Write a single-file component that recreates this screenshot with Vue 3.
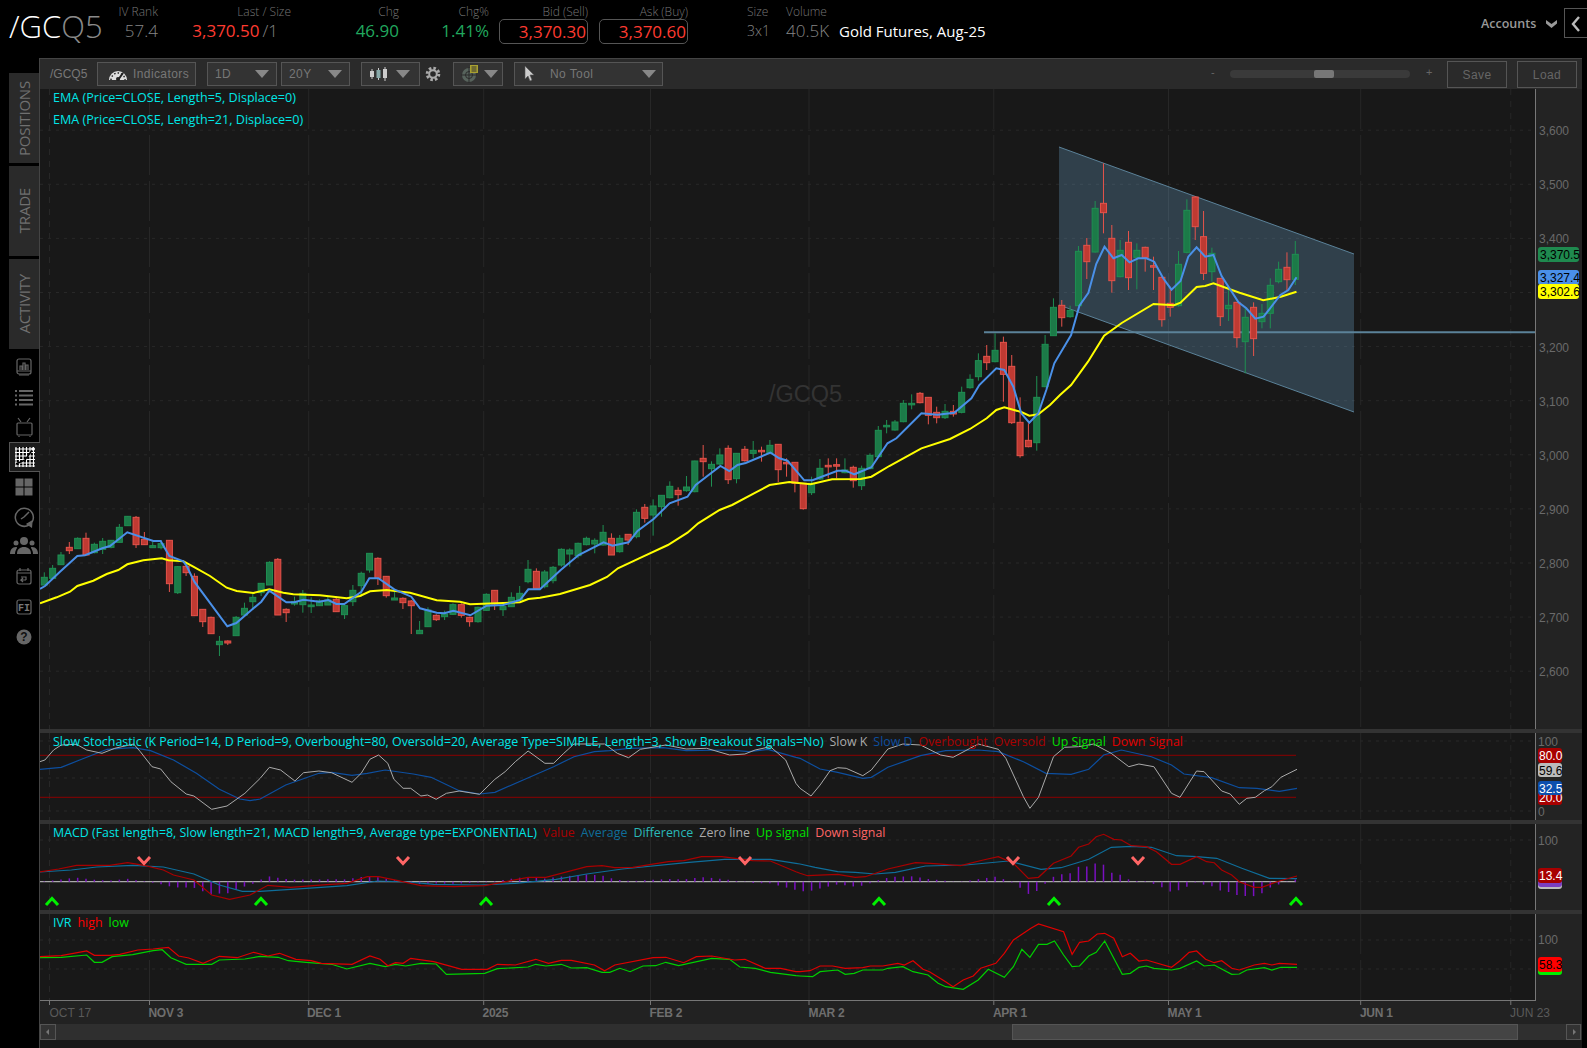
<script setup>
// measured from the chart: each block keeps its own x/y origin and x scale
const barX = (i) => 44.3 + 8.34 * i

function rows(start, yBase, list) {
  return list.map((r, n) => ({
    x: barX(start + n),
    up: r[0] === 'g',
    hi: yBase + r[1] / 3,
    top: yBase + r[2] / 3,
    bot: yBase + r[3] / 3,
    lo: yBase + r[4] / 3
  }))
}

const candles = [
  ...rows(0, 490, [
    ['g',247,262,285,285],['g',225,235,265,265],['g',186,195,224,224],['r',156,172,182,192],['g',142,145,176,177],
    ['r',128,145,195,195],['g',158,163,188,190],['g',144,154,178,192],['g',150,151,172,175],['g',102,112,157,158],
    ['g',78,79,107,108],['r',78,82,164,174],['r',126,148,164,165],['g',155,167,173,173],['g',150,161,173,178],
    ['r',150,151,281,306],['g',228,230,308,312],['r',228,229,248,258],['r',250,259,377,378],['r',358,358,395,411],
    ['r',380,382,431,431],['g',438,454,464,498],['r',451,453,459,465],['g',378,382,437,437],['g',338,355,375,375],
    ['g',310,322,335,360],['g',280,280,308,318],['g',214,217,285,285],['r',204,208,375,375],['r',355,358,368,396],
    ['g',320,335,342,347],['g',300,310,344,368],['g',322,345,350,369],['g',328,333,347,348],['g',320,330,345,345],
    ['r',320,328,365,365],['g',340,347,374,387],['g',285,301,335,348],['g',245,250,287,320],['g',190,190,240,248],
    ['r',202,205,265,285],['r',258,259,317,323],['g',305,324,330,330],['r',322,325,338,357],['r',330,333,347,432],
    ['g',393,421,431,431],['g',352,360,410,411],['r',373,376,389,393],['g',362,372,380,390],['g',340,344,373,375],
    ['r',340,344,376,383],['r',380,382,395,410],['g',350,352,395,398],['g',310,313,361,362],['r',300,301,342,360],
    ['g',340,350,359,378],['g',307,322,350,350],['g',288,310,330,335],['g',210,238,275,280],['r',235,244,295,295]
  ]),
  ...rows(60, 370, [
    ['g',600,606,650,655],['g',588,592,632,640],['g',535,538,585,590],['g',535,540,552,590],['g',518,520,557,565],
    ['g',500,505,524,526],['g',505,511,522,550],['g',465,487,525,527],['r',490,505,555,555],['g',495,505,545,548],
    ['r',493,493,510,525],['g',418,427,500,505],['r',402,412,445,458],['g',388,408,435,497],['g',376,376,410,440],
    ['g',334,349,383,385],['r',352,361,374,407],['g',318,351,362,365],['g',272,273,365,367],['r',225,265,275,320],
    ['g',274,283,296,350],['g',235,255,282,285],['r',226,235,329,342],['g',250,250,326,340],['r',228,238,272,275],
    ['g',213,241,250,265],['r',230,241,245,275],['g',210,226,250,252],['r',222,223,299,336],['r',265,277,281,320],
    ['r',277,277,340,367],['r',340,340,416,419],['g',320,340,368,375],['g',267,295,327,330],['r',265,286,288,325],
    ['r',265,284,287,325],['g',265,300,308,310],['r',287,292,332,353],['g',287,295,347,360],['g',250,256,296,298],
    ['g',168,181,260,262],['g',150,166,170,190],['g',150,156,180,182],['g',90,100,155,157],['g',73,100,104,118],
    ['r',66,70,98,100],['r',82,82,136,163],['r',110,127,143,160],['g',102,124,143,147],['r',105,124,132,140]
  ]),
  ...rows(110, 330, [
    ['g',170,187,247,250],['g',133,148,173,176],['g',70,92,140,152],['r',45,79,98,120],['g',10,61,95,97],
    ['r',20,37,133,215],['r',75,109,278,282],['r',202,277,377,383],['r',280,331,350,352],['g',138,202,338,362],
    ['g',15,43,170,172]
  ]),
  ...rows(121, 140, [
    ['g',475,502,587,587],['r',480,496,533,560],['g',497,511,530,533],['g',318,334,497,497],['r',294,316,365,417],
    ['g',183,205,336,338],['r',70,190,218,280],['r',255,295,422,458],['g',300,331,410,412],['r',273,307,413,450],
    ['g',310,331,352,448],['r',320,322,352,395],['r',350,377,380,450],['r',412,412,539,560],['r',440,490,502,530],
    ['g',333,373,497,500],['g',178,211,337,340],['r',168,171,260,300],['r',213,290,400,420],['g',323,340,395,425],
    ['r',415,415,530,558],['g',450,496,506,543],['r',487,487,593,623],['g',500,532,605,700],['r',487,502,596,648],
    ['g',492,520,545,565],['g',415,436,520,565],['g',365,388,425,430],['r',337,382,419,450],['g',303,343,418,435]
  ])
]

function seg(xBase, xScale, yBase, flat) {
  const out = []
  for (let i = 0; i < flat.length; i += 2) out.push([xBase + flat[i] / xScale, yBase + flat[i + 1] / 3])
  return out
}
const join = (pts) => pts.map((p) => p[0].toFixed(1) + ',' + p[1].toFixed(1)).join(' ')

const yellow = join([
  ...seg(40, 3, 490, [0,340,50,322,90,305,112,288,160,272,200,252,235,240,262,223,310,211,365,205,385,211,430,214,460,230,510,258,560,293,590,303,640,309,688,298,730,308,760,313,840,316,920,325,960,318,990,304,1040,300,1110,308,1190,331,1260,335,1290,343,1440,337,1465,327,1500,323]),
  [560, 594], [590, 585], [607, 577],
  ...seg(500, 2.8, 370, [330,595,400,560,470,525,525,488,555,460,615,420,650,405,715,368,755,345,810,336,870,343,930,328,1010,327,1040,320,1090,288,1180,235]),
  ...seg(950, 3, 330, [0,327,60,297,110,265,139,240,163,232,214,246,238,257,265,253,300,225,330,195]),
  ...seg(1000, 2.671, 140, [190,735,235,665,278,587,325,549,410,492,465,496,482,488,525,441,548,438,570,430,640,458,703,481,750,470,792,455])
])

const blue = join([
  ...seg(40, 3, 490, [0,297,15,288,60,245,112,198,135,196,187,175,210,168,262,127,340,153,362,153,388,198,430,214,440,228,463,275,562,409,589,399,637,358,664,335,688,302,739,337,763,337,790,329,838,335,865,330,889,342,913,342,964,305,988,265,1015,265,1063,298,1114,320,1140,355,1190,368,1213,370,1240,362,1291,376,1340,347,1390,345,1440,330,1465,298,1500,298]),
  ...seg(500, 2.8, 370, [170,600,220,555,290,517,315,527,360,517,385,483,430,447,475,400,525,380,548,345,617,288,642,303,665,285,688,279,757,248,782,265,805,272,852,331,875,331,945,302,968,302,992,313,1040,292,1085,220,1110,205,1180,130,1225,134,1272,128,1320,85]),
  ...seg(950, 3, 330, [88,165,139,115,163,120,190,170,214,250,238,278,265,250,289,180,313,100]),
  ...seg(1000, 2.671, 140, [190,585,212,497,236,458,257,372,279,320,303,355,325,345,346,367,369,355,391,355,412,365,436,415,458,449,482,423,503,350,525,322,548,350,570,345,592,408,637,487,658,505,682,536,704,530,749,465,770,450,792,412])
])

const both = (a, b) => [...seg(0, 1.96, 720, a), ...seg(800, 1.992, 720, b)]

const slowK = join(both(
  [78,125,88,120,105,90,120,75,150,73,170,90,200,100,225,85,262,72,275,95,298,140,315,147,335,185,365,222,380,228,415,268,445,258,480,220,510,175,528,142,550,150,578,183,595,158,625,153,650,158,690,187,708,160,725,118,742,105,760,130,772,178,790,205,805,205,825,228,838,225,855,238,875,220,900,213,940,223,970,178,990,155,1010,125,1035,93,1068,130,1085,130,1105,100,1125,72,1185,72,1210,100,1232,113,1255,88,1305,75,1345,87,1385,85,1430,105,1460,102,1480,90,1510,80,1540,120,1560,190],
  [0,205,22,228,40,195,60,152,75,143,92,145,125,167,142,150,175,87,205,72,240,75,280,105,305,112,355,72,395,88,410,115,445,230,458,265,475,232,505,110,527,82,555,80,585,72,620,100,655,140,675,132,705,140,740,220,757,232,790,153,805,155,840,213,857,222,875,253,890,235,907,232,925,212,940,200,958,172,990,148]
))
const slowD = join(both(
  [78,148,120,142,160,118,210,88,260,83,295,92,340,120,385,160,430,208,470,237,490,242,510,237,560,195,625,160,650,157,690,166,720,160,755,150,810,162,845,172,900,212,940,222,970,217,1040,170,1085,140,1125,110,1165,95,1195,92,1232,85,1300,83,1345,92,1430,90,1468,95,1505,88,1560,112],
  [0,115,40,147,75,157,125,175,142,172,175,142,240,107,290,92,355,90,395,95,445,125,490,160,540,163,575,148,605,105,640,90,700,110,740,135,765,162,820,173,875,203,910,205,955,214,990,205]
))

const macdValue = both(
  [78,456,115,447,150,436,215,436,250,428,285,437,320,450,340,465,380,480,415,525,450,538,490,525,525,496,570,502,640,494,680,490,720,470,742,470,780,482,825,497,890,500,950,497,1035,472,1070,472,1150,440,1180,437,1205,443,1240,442,1310,425,1340,422,1375,410,1415,410,1475,422,1510,423,1560,455],
  [0,460,15,467,75,463,110,472,130,470,175,447,230,428,260,430,320,437,365,420,395,410,425,430,455,475,475,472,505,430,540,408,555,382,575,372,590,350,605,343,625,358,640,360,660,377,690,380,710,395,740,433,757,433,790,410,810,425,825,428,840,450,860,465,875,485,905,502,920,502,950,485,990,468]
)
const macdAvg = both(
  [78,456,140,450,190,441,260,436,320,441,380,462,430,495,475,514,510,514,600,505,680,497,740,483,800,486,850,493,940,495,1010,490,1090,478,1150,462,1220,447,1345,428,1420,418,1510,418,1560,430],
  [0,432,30,442,75,455,110,457,150,462,190,457,250,438,330,435,415,423,480,448,520,443,575,418,620,382,660,379,700,382,750,407,790,410,830,415,880,445,935,475,990,476]
)
const macdValueLine = join(macdValue)
const macdAvgLine = join(macdAvg)

const ivrHigh = join(both(
  [78,710,120,707,170,693,185,706,215,706,235,703,270,690,300,687,330,682,350,708,370,714,398,730,430,709,465,713,497,697,525,708,548,700,580,718,610,722,630,730,690,733,725,708,745,718,760,737,775,728,790,730,805,715,850,725,905,748,955,748,975,733,1010,735,1050,718,1075,730,1100,721,1120,721,1165,735,1185,752,1205,735,1280,713,1305,712,1340,728,1365,710,1395,708,1440,720,1460,718,1500,745,1530,745,1560,755],
  [0,755,20,752,40,738,65,738,90,745,125,743,140,738,165,738,195,730,208,735,225,722,245,748,258,755,290,785,305,800,325,780,345,768,360,745,390,730,407,700,425,660,460,625,475,612,525,635,542,703,557,667,575,663,592,642,607,640,625,655,642,710,658,700,675,723,690,720,740,742,757,722,775,697,790,693,808,718,825,728,840,722,860,745,875,750,905,735,925,730,940,735,955,730,990,733]
))
const ivrLow = join(both(
  [78,713,120,712,170,705,185,727,200,727,220,710,260,704,300,692,318,689,335,713,365,733,415,733,430,720,480,717,510,709,545,712,565,722,600,727,650,733,680,747,725,730,755,740,775,733,795,738,825,730,855,732,875,763,950,760,975,746,1035,741,1050,733,1070,738,1100,733,1120,744,1150,743,1180,757,1195,757,1215,745,1235,755,1260,738,1285,737,1305,727,1330,737,1395,715,1430,718,1450,741,1480,745,1510,757,1560,767],
  [0,768,25,770,40,755,75,750,90,763,108,760,125,750,165,750,175,745,205,740,225,755,255,765,275,790,290,800,325,808,355,780,375,748,407,772,425,740,442,688,458,712,475,673,492,673,507,663,525,705,542,740,557,738,575,708,590,697,607,663,642,763,658,760,675,742,690,738,705,745,740,750,757,745,790,723,805,738,825,735,860,763,875,762,890,750,925,743,940,750,958,742,990,742]
))

// histogram is value minus average, read off the two lines at each bar
function yAt(line, x) {
  for (let i = 1; i < line.length; i++) {
    if (x <= line[i][0]) {
      const [x0, y0] = line[i - 1]
      const [x1, y1] = line[i]
      return y0 + ((y1 - y0) * (x - x0)) / (x1 - x0 || 1)
    }
  }
  return line[line.length - 1][1]
}
const zeroY = 881.7
const hist = candles.map((c) => ({
  x: c.x,
  y: zeroY - (yAt(macdAvg, c.x) - yAt(macdValue, c.x))
}))

const downMarks = [[144, 861], [403, 861], [745, 861], [1013, 861], [1138, 861]]
const upMarks = [[52, 901], [261, 901], [486, 901], [879, 901], [1054, 901], [1296, 901]]

const dates = [
  { label: 'OCT 17', x: 49.5, text: 49.5, minor: true },
  { label: 'NOV 3', x: 149.5, text: 148.5 },
  { label: 'DEC 1', x: 308.7, text: 307 },
  { label: '2025', x: 483.7, text: 482.6 },
  { label: 'FEB 2', x: 650.5, text: 649.5 },
  { label: 'MAR 2', x: 809, text: 808.5 },
  { label: 'APR 1', x: 993.8, text: 993 },
  { label: 'MAY 1', x: 1168.5, text: 1167.5 },
  { label: 'JUN 1', x: 1360.7, text: 1360 },
  { label: 'JUN 23', x: 1510.8, text: 1510, minor: true }
]

const prices = [3600, 3500, 3400, 3300, 3200, 3100, 3000, 2900, 2800, 2700, 2600]
const priceY = (p) => 184.3 + (3500 - p) * 0.541
const priceTicks = prices.map((p) => ({
  y: priceY(p),
  label: p === 3300 ? '' : p.toLocaleString('en-US')
}))

const quotes = [
  { label: 'IV Rank', value: '57.4', cls: 'q-iv' },
  { label: 'Last / Size', value: '3,370.50', extra: '/1', cls: 'q-last' },
  { label: 'Chg', value: '46.90', cls: 'q-chg' },
  { label: 'Chg%', value: '1.41%', cls: 'q-pct' },
  { label: 'Bid (Sell)', value: '3,370.30', cls: 'q-bid' },
  { label: 'Ask (Buy)', value: '3,370.60', cls: 'q-ask' }
]
</script>

<template>
  <div class="app">
    <header class="topbar">
      <div class="symbol"><span class="sym-a">/GC</span><span class="sym-b">Q5</span></div>
      <div v-for="q in quotes" :key="q.label" class="quote" :class="q.cls">
        <span class="q-label">{{ q.label }}</span>
        <span class="q-value">{{ q.value }}<i v-if="q.extra" class="q-extra">{{ q.extra }}</i></span>
      </div>
      <div class="quote left q-size"><span class="q-label">Size</span><span class="q-value small">3x1</span></div>
      <div class="quote left q-vol"><span class="q-label">Volume</span><span class="q-value">40.5K</span></div>
      <div class="desc">Gold Futures, Aug-25</div>
      <div class="accounts">
        <span>Accounts</span>
        <svg width="13" height="10" viewBox="0 0 13 10"><path d="M1 1l5.5 4L12 1v3.5L6.5 9 1 4.5z" fill="#999" /></svg>
      </div>
      <div class="collapse">
        <svg width="10" height="16" viewBox="0 0 10 16"><path d="M8 1L2 8l6 7" fill="none" stroke="#bbb" stroke-width="2.4" /></svg>
      </div>
    </header>

    <div class="body">
      <aside class="side">
        <div class="tab"><span>POSITIONS</span></div>
        <div class="tab"><span>TRADE</span></div>
        <div class="tab"><span>ACTIVITY</span></div>

        <div class="icons">
          <svg class="ic" viewBox="0 0 30 30">
            <rect x="8" y="7" width="14" height="15" rx="2" />
            <path d="M8 19h14M10 23h10M11 18v-4h2v4M14 18v-7h2v7M17 18v-5h2v5" />
          </svg>
          <svg class="ic" viewBox="0 0 30 30">
            <path d="M6 9h2M10 9h14M6 13.500h2M10 13.500h14M6 18h2M10 18h14M6 22.500h2M10 22.500h14" stroke-width="1.800" />
          </svg>
          <svg class="ic" viewBox="0 0 30 30">
            <rect x="8" y="11" width="15" height="12" rx="1" />
            <path d="M12 10l-3-4M18 10l3-4M10 24v1M21 24v1" />
          </svg>
          <div class="ic-active">
            <svg width="20" height="20" viewBox="0 0 20 20">
              <rect width="20" height="20" fill="#000" />
              <path d="M1 0v20M4.500 0v20M8 0v20M11.500 0v20M15 0v20M18.500 0v20M0 2h20M0 5.500h20M0 9h20M0 12.500h20M0 16h20M0 19h20" stroke="#fff" stroke-width="1.200" />
              <path d="M1 17L10 13l8-11" stroke="#000" stroke-width="1.500" fill="none" />
              <circle cx="18" cy="2" r="1.800" fill="#fff" />
            </svg>
          </div>
          <svg class="ic filled" viewBox="0 0 30 30">
            <rect x="6.500" y="6.500" width="8" height="8" /><rect x="15.500" y="6.500" width="8" height="8" />
            <rect x="6.500" y="15.500" width="8" height="8" /><rect x="15.500" y="15.500" width="8" height="8" />
          </svg>
          <svg class="ic" viewBox="0 0 30 30">
            <path d="M23 20a9 9 0 1 0-3 3" stroke-width="1.500" />
            <path d="M15 15l5-5M15 15l-3 2" stroke-width="1.500" />
            <path d="M18 22l5-3-0.500 6z" fill="#666" />
          </svg>
          <svg class="ic filled" viewBox="0 0 30 30">
            <circle cx="15" cy="9" r="4" /><path d="M8 22c0-5 3-7 7-7s7 2 7 7z" />
            <circle cx="7" cy="11" r="2.500" /><path d="M1 22c0-4 2-7 6-7 1 0 1 0 1 1-1 2-2 3-2 6z" />
            <circle cx="23" cy="11" r="2.500" /><path d="M29 22c0-4-2-7-6-7-1 0-1 0-1 1 1 2 2 3 2 6z" />
          </svg>
          <svg class="ic" viewBox="0 0 30 30">
            <rect x="8" y="8" width="14" height="14" rx="2" />
            <path d="M8 11h14M11 6v3M19 6v3M17 18h-5l2-2M12 18l2 2M12 15h5v3" />
          </svg>
          <svg class="ic" viewBox="0 0 30 30">
            <rect x="8" y="8" width="14" height="14" rx="2" />
            <text x="15" y="19" text-anchor="middle" class="fi">FI</text>
          </svg>
          <svg class="ic filled" viewBox="0 0 30 30">
            <circle cx="15" cy="15" r="7.500" />
            <text x="15" y="19" text-anchor="middle" class="qm">?</text>
          </svg>
        </div>
      </aside>

      <main class="chart">
        <div class="toolbar">
          <span class="tb-sym">/GCQ5</span>
          <div class="tb-btn b-ind">
            <svg width="20" height="16" viewBox="0 0 20 16">
              <path d="M1 14a9 9 0 0 1 18 0z" fill="#ddd" />
              <path d="M3 14a7 7 0 0 1 14 0" fill="none" stroke="#222" stroke-width="1.500" stroke-dasharray="1.500 2" />
              <path d="M10 14l5-7" stroke="#222" stroke-width="2" />
              <circle cx="10" cy="13" r="2" fill="#222" />
            </svg>
            <span>Indicators</span>
          </div>
          <div class="tb-btn b-1d"><span>1D</span><i class="caret"></i></div>
          <div class="tb-btn b-20y"><span>20Y</span><i class="caret"></i></div>
          <div class="tb-btn b-kind">
            <svg width="20" height="16" viewBox="0 0 20 16">
              <path d="M3 3v10M9.500 2v12M16 1v14" stroke="#ccc" />
              <rect x="1" y="5" width="4" height="6" fill="#ccc" />
              <rect x="7.500" y="4" width="4" height="8" fill="#8aa" />
              <rect x="14" y="3" width="4" height="9" fill="#ccc" />
            </svg>
            <i class="caret"></i>
          </div>
          <svg class="gear" width="16" height="16" viewBox="0 0 16 16">
            <circle cx="8" cy="8" r="5.800" fill="none" stroke="#aaa" stroke-width="3" stroke-dasharray="2.500 2" />
            <circle cx="8" cy="8" r="3.800" fill="none" stroke="#aaa" stroke-width="2" />
          </svg>
          <div class="tb-btn b-draw">
            <svg width="20" height="18" viewBox="0 0 20 18">
              <circle cx="9" cy="10" r="7" fill="#57635c" />
              <path d="M9 2v16M1 10h16" stroke="#2b2b2b" />
              <circle cx="9" cy="10" r="3.500" fill="none" stroke="#2b2b2b" />
              <rect x="10" y="0" width="8" height="8" fill="#a8a030" />
              <path d="M11.500 2h5M11.500 4h5M11.500 6h5" stroke="#333" />
            </svg>
            <i class="caret"></i>
          </div>
          <div class="tb-btn b-tool">
            <svg width="12" height="18" viewBox="0 0 12 18"><path d="M1 1v13l3-3 2 5 2-1-2-5h4z" fill="#ccc" stroke="#555" stroke-width="0.600" /></svg>
            <span>No Tool</span>
            <i class="caret"></i>
          </div>
          <span class="zoom-sign z-minus">-</span>
          <div class="slider"><div class="thumb"></div></div>
          <span class="zoom-sign z-plus">+</span>
          <div class="tb-btn b-save"><span>Save</span></div>
          <div class="tb-btn b-load"><span>Load</span></div>
        </div>

        <section class="panel p-main">
          <svg width="1542" height="640" viewBox="40 89 1542 640">
            <rect x="1535" y="89" width="47" height="640" class="axis-bg" />
            <line v-for="t in priceTicks" :key="t.y" x1="40" x2="1535" :y1="t.y" :y2="t.y" class="grid-h" />
            <line v-for="d in dates" :key="d.label" :x1="d.x" :x2="d.x" y1="89" y2="729" class="grid-v" :class="{ minor: d.minor }" />
            <text x="769" y="402" class="watermark">/GCQ5</text>
            <polygon points="1059,147 1354,254 1354,412 1059,305" class="channel" />
            <path d="M1059 147L1354 254M1059 305L1354 412" class="channel-edge" />
            <line x1="984" x2="1535" y1="332.300" y2="332.300" class="support" />
            <g v-for="(c, i) in candles" :key="i" :class="c.up ? 'up' : 'down'">
              <line :x1="c.x" :x2="c.x" :y1="c.hi" :y2="c.lo" class="wick" />
              <rect :x="c.x - 3" :y="c.top" width="6" :height="Math.max(c.bot - c.top, 1.500)" class="body-r" />
            </g>
            <polyline :points="yellow" class="l-yellow" />
            <polyline :points="blue" class="l-blue" />
            <line x1="1535.500" x2="1535.500" y1="89" y2="729" class="axis-line" />
            <text v-for="t in priceTicks" :key="t.y + 'l'" x="1539" :y="t.y + 5" class="axis-text">{{ t.label }}</text>
            <rect x="1538" y="247" width="41" height="15" rx="3" fill="#1f8a4f" />
            <text x="1540" y="258.500" class="tag-text">3,370.5</text>
            <rect x="1538" y="270" width="41" height="15" rx="3" fill="#4a8fe8" />
            <text x="1540" y="281.500" class="tag-text">3,327.4</text>
            <rect x="1538" y="284" width="41" height="15" rx="3" fill="#ffff00" />
            <text x="1540" y="295.500" class="tag-text">3,302.6</text>
          </svg>
          <div class="legend big"><span class="cy">EMA (Price=CLOSE, Length=5, Displace=0)</span></div>
          <div class="legend big second"><span class="cy">EMA (Price=CLOSE, Length=21, Displace=0)</span></div>
        </section>
        <div class="sep"></div>

        <section class="panel p-stoch">
          <svg width="1542" height="87" viewBox="40 733 1542 87">
            <rect x="1535" y="733" width="47" height="87" class="axis-bg" />
            <line x1="40" x2="1535" y1="741" y2="741" class="grid-h" />
            <line x1="40" x2="1535" y1="778" y2="778" class="grid-h" />
            <line x1="40" x2="1535" y1="811" y2="811" class="grid-h" />
            <line v-for="d in dates" :key="d.label" :x1="d.x" :x2="d.x" y1="733" y2="820" class="grid-v" :class="{ minor: d.minor }" />
            <line x1="40" x2="1296" y1="755.300" y2="755.300" class="l-band" />
            <line x1="40" x2="1296" y1="797.300" y2="797.300" class="l-band" />
            <polyline :points="slowD" class="l-slowd" />
            <polyline :points="slowK" class="l-slowk" />
            <line x1="1535.500" x2="1535.500" y1="733" y2="820" class="axis-line" />
            <text x="1538" y="746" class="axis-text">100</text>
            <text x="1538" y="816" class="axis-text">0</text>
            <rect x="1538" y="790" width="24" height="15" rx="3" fill="#a80000" />
            <text x="1539" y="802" class="tag-text white">20.0</text>
            <rect x="1538" y="748" width="24" height="15" rx="3" fill="#a80000" />
            <text x="1539" y="760" class="tag-text white">80.0</text>
            <rect x="1538" y="763" width="24" height="14" rx="3" fill="#bbb" />
            <text x="1539" y="775" class="tag-text">59.6</text>
            <rect x="1538" y="781" width="24" height="14" rx="3" fill="#0d4fae" />
            <text x="1539" y="793" class="tag-text white">32.5</text>
          </svg>
          <div class="legend">
            <span class="cy">Slow Stochastic (K Period=14, D Period=9, Overbought=80, Oversold=20, Average Type=SIMPLE, Length=3, Show Breakout Signals=No)</span>
            <span class="c-gray">Slow K</span><span class="c-navy">Slow D</span><span class="c-dred">Overbought</span><span class="c-dred">Oversold</span><span class="c-green">Up Signal</span><span class="c-red">Down Signal</span>
          </div>
        </section>
        <div class="sep"></div>

        <section class="panel p-macd">
          <svg width="1542" height="86" viewBox="40 824 1542 86">
            <rect x="1535" y="824" width="47" height="86" class="axis-bg" />
            <line x1="40" x2="1535" y1="840" y2="840" class="grid-h" />
            <line v-for="d in dates" :key="d.label" :x1="d.x" :x2="d.x" y1="824" y2="910" class="grid-v" :class="{ minor: d.minor }" />
            <line x1="40" x2="1535" :y1="zeroY" :y2="zeroY" class="grid-h" />
            <line x1="40" x2="1296" :y1="zeroY" :y2="zeroY" class="l-zero" />
            <line v-for="h in hist" :key="h.x" :x1="h.x" :x2="h.x" :y1="zeroY" :y2="h.y" class="l-hist" />
            <polyline :points="macdAvgLine" class="l-avg" />
            <polyline :points="macdValueLine" class="l-value" />
            <path v-for="m in downMarks" :key="m[0]" :d="`M${m[0] - 6} ${m[1] - 4}l6 6.500 6-6.500`" class="mark-down" />
            <path v-for="m in upMarks" :key="m[0]" :d="`M${m[0] - 6} ${m[1] + 4}l6-6.500 6 6.500`" class="mark-up" />
            <line x1="1535.500" x2="1535.500" y1="824" y2="910" class="axis-line" />
            <text x="1538" y="845" class="axis-text">100</text>
            <rect x="1538" y="881" width="24" height="8" rx="3" fill="#bbb" />
            <rect x="1538" y="880" width="24" height="7" rx="3" fill="#7a3fc0" />
            <rect x="1538" y="868" width="24" height="15" rx="3" fill="#a80000" />
            <text x="1539" y="880" class="tag-text white">13.4</text>
          </svg>
          <div class="legend">
            <span class="cy">MACD (Fast length=8, Slow length=21, MACD length=9, Average type=EXPONENTIAL)</span>
            <span class="c-dred">Value</span><span class="c-teal">Average</span><span class="c-cyan2">Difference</span><span class="c-gray">Zero line</span><span class="c-green">Up signal</span><span class="c-salmon">Down signal</span>
          </div>
        </section>
        <div class="sep"></div>

        <section class="panel p-ivr">
          <svg width="1542" height="86" viewBox="40 914 1542 86">
            <rect x="1535" y="914" width="47" height="86" class="axis-bg" />
            <line x1="40" x2="1535" y1="940" y2="940" class="grid-h" />
            <line x1="40" x2="1535" y1="969" y2="969" class="grid-h" />
            <line v-for="d in dates" :key="d.label" :x1="d.x" :x2="d.x" y1="914" y2="1000" class="grid-v" :class="{ minor: d.minor }" />
            <polyline :points="ivrLow" class="l-low" />
            <polyline :points="ivrHigh" class="l-high" />
            <line x1="1535.500" x2="1535.500" y1="914" y2="1000" class="axis-line" />
            <text x="1538" y="944" class="axis-text">100</text>
            <rect x="1538" y="965" width="24" height="10" rx="3" fill="#00ee00" />
            <rect x="1538" y="957" width="24" height="15" rx="3" fill="#ff0000" />
            <text x="1539" y="969" class="tag-text">58.3</text>
          </svg>
          <div class="legend">
            <span class="cy">IVR</span><span class="c-bright">high</span><span class="c-green">low</span>
          </div>
        </section>

        <div class="dates">
          <svg width="1542" height="24" viewBox="40 1000 1542 24">
            <line x1="40" x2="1536" y1="0.500" y2="0.500" class="axis-line" transform="translate(0 1000)" />
            <line v-for="d in dates" :key="d.label" :x1="d.x" :x2="d.x" y1="1000" y2="1005" class="axis-line" />
            <text v-for="d in dates" :key="d.label + 't'" :x="d.text" y="1017" class="date-text" :class="{ minor: d.minor }">{{ d.label }}</text>
          </svg>
        </div>

        <div class="scrollbar">
          <div class="sb-btn"><svg width="6" height="8" viewBox="0 0 6 8"><path d="M4 1L1 4l3 3z" fill="#777" /></svg></div>
          <div class="sb-thumb"></div>
          <div class="sb-btn right"><svg width="6" height="8" viewBox="0 0 6 8"><path d="M2 1l3 3-3 3z" fill="#777" /></svg></div>
        </div>
      </main>
    </div>
  </div>
</template>

<style>
html, body { background: #000; overflow: hidden; }
</style>

<style scoped>
.app {
  width: 1587px;
  height: 1048px;
  background: #000;
  font-family: "Open Sans", sans-serif;
  color: #777;
  overflow: hidden;
}

/* quote strip */
.topbar {
  height: 58px;
  display: flex;
  align-items: flex-start;
  position: relative;
}
.symbol {
  width: 117px;
  padding: 8px 0 0 9px;
  box-sizing: border-box;
  font-size: 31px;
  line-height: 36px;
  font-weight: 300;
  white-space: nowrap;
}
.sym-a { color: #fff; }
.sym-b { color: #8a8a8a; }
.quote {
  display: flex;
  flex-direction: column;
  align-items: flex-end;
  box-sizing: border-box;
}
.quote.left { align-items: flex-start; }
.q-label {
  font-size: 12px;
  line-height: 14px;
  margin-top: 5px;
  color: #757575;
  font-weight: 300;
  white-space: nowrap;
}
.q-value {
  font-size: 17px;
  line-height: 24px;
  margin-top: 0;
  color: #858585;
  white-space: nowrap;
  font-weight: 300;
}
.q-value.small { font-size: 14px; }
.q-extra { font-style: normal; color: #858585; margin-left: 3px; }
.q-iv { width: 41px; }
.q-last { width: 133px; }
.q-last .q-value { color: #ff3b30; margin-right: 13px; font-weight: 400; }
.q-last .q-extra { font-weight: 300; }
.q-chg { width: 108px; }
.q-pct { width: 90px; }
.q-chg .q-value, .q-pct .q-value { color: #20a85e; font-weight: 400; }
.q-bid { width: 99px; }
.q-ask { width: 100px; }
.q-bid .q-value, .q-ask .q-value {
  width: 89px;
  height: 25px;
  line-height: 23px;
  box-sizing: border-box;
  border: 1px solid #555;
  border-radius: 5px;
  color: #ff3b30;
  text-align: right;
  padding-right: 1px;
  font-weight: 400;
}
.q-size { margin-left: 59px; width: 39px; }
.q-vol { width: 53px; }
.desc {
  font-size: 15px;
  line-height: 24px;
  margin-top: 19px;
  color: #fff;
  white-space: nowrap;
}
.accounts {
  position: absolute;
  left: 1481px;
  top: 14px;
  display: flex;
  align-items: center;
  gap: 9px;
  font-size: 12.5px;
  line-height: 20px;
  font-weight: 600;
  color: #999;
}
.collapse {
  position: absolute;
  left: 1564px;
  top: 8px;
  width: 23px;
  height: 30px;
  box-sizing: border-box;
  border: 1px solid #555;
  border-right: 0;
  padding: 6px 0 0 6px;
}

.body { display: flex; height: 990px; }

/* left rail */
.side {
  width: 39px;
  padding: 15px 0 0 9px;
  box-sizing: border-box;
  flex: none;
}
.tab {
  width: 30px;
  height: 90px;
  margin-bottom: 3px;
  background: #2a2a2a;
  display: flex;
  align-items: center;
  justify-content: center;
}
.tab span {
  writing-mode: vertical-rl;
  transform: rotate(180deg);
  font-size: 15px;
  color: #707070;
  letter-spacing: -0.2px;
}
.icons {
  display: flex;
  flex-direction: column;
  margin-left: -9px;
  margin-top: 0;
}
.ic {
  width: 30px;
  height: 30px;
  margin-left: 9px;
  fill: none;
  stroke: #666;
  stroke-width: 1.2;
}
.ic.filled { fill: #666; stroke: none; }
.ic .fi {
  font-family: "Liberation Mono", monospace;
  font-size: 10px;
  font-weight: 700;
  fill: #777;
  stroke: none;
}
.ic .qm {
  font-family: "Liberation Sans", sans-serif;
  font-size: 12px;
  font-weight: 700;
  fill: #111;
}
.ic-active {
  width: 31px;
  height: 30px;
  margin-left: 9px;
  box-sizing: border-box;
  background: #1c1c1c;
  border: 1px solid #555;
  border-right: 0;
  display: flex;
  align-items: center;
  justify-content: center;
  position: relative;
}

/* chart column */
.chart {
  width: 1543px;
  flex: none;
  border-left: 1px solid #444;
  box-sizing: border-box;
  background: #181818;
}
.toolbar {
  height: 31px;
  box-sizing: border-box;
  border-top: 1px solid #444;
  background: #2a2a2a;
  display: flex;
  align-items: center;
  font-family: "Liberation Sans", sans-serif;
  font-size: 12px;
  color: #777;
  position: relative;
}
.tb-sym { width: 57px; padding-left: 10px; box-sizing: border-box; flex: none; }
.tb-btn {
  height: 24px;
  box-sizing: border-box;
  border: 1px solid #555;
  background: #333;
  display: flex;
  align-items: center;
  flex: none;
  letter-spacing: 0.4px;
}
.caret {
  width: 0;
  height: 0;
  margin-left: auto;
  border-left: 7px solid transparent;
  border-right: 7px solid transparent;
  border-top: 8px solid #888;
}
.b-ind { width: 99px; padding-left: 10px; gap: 5px; }
.b-1d { width: 70px; margin-left: 11px; padding: 0 7px; }
.b-20y { width: 69px; margin-left: 4px; padding: 0 7px; }
.b-kind { width: 59px; margin-left: 11px; padding: 0 9px 0 7px; }
.gear { margin-left: 5px; flex: none; }
.b-draw { width: 50px; margin-left: 12px; padding: 0 4px 0 6px; }
.b-tool { width: 149px; margin-left: 11px; padding: 0 6px 0 9px; gap: 14px; }
.zoom-sign { position: absolute; top: 7px; font-size: 11px; color: #666; }
.z-minus { left: 1171px; }
.z-plus { left: 1386px; }
.slider {
  position: absolute;
  left: 1190px;
  top: 11px;
  width: 180px;
  height: 8px;
  background: #3a3a3a;
  border-radius: 4px;
}
.thumb {
  margin-left: 84px;
  width: 20px;
  height: 8px;
  border-radius: 2px;
  background: #777;
}
.b-save, .b-load {
  position: absolute;
  top: 2px;
  width: 60px;
  height: 27px;
  justify-content: center;
  background: #2a2a2a;
  color: #666;
}
.b-save { left: 1407px; }
.b-load { left: 1477px; }

.panel { position: relative; }
.panel svg { display: block; }
.p-main { height: 640px; }
.p-stoch { height: 87px; }
.p-macd { height: 86px; }
.p-ivr { height: 86px; }
.sep { height: 4px; background: #333; }

.legend {
  position: absolute;
  left: 13px;
  top: 0;
  display: flex;
  gap: 6px;
  font-size: 12.4px;
  line-height: 18px;
  white-space: nowrap;
}
.legend.big { font-size: 12.6px; font-weight: 500; }
.second { top: 22px; }
.cy { color: #00e6e6; }
.c-gray { color: #aaa; }
.c-navy { color: #0d4fa0; }
.c-dred { color: #a80000; }
.c-green { color: #00e000; }
.c-red { color: #e00000; }
.c-bright { color: #f00; }
.c-teal { color: #0f6e9a; }
.c-cyan2 { color: #2ab8b8; }
.c-salmon { color: #f66; }

.dates { height: 24px; background: #222; }
.dates svg { display: block; }

.scrollbar {
  height: 16px;
  background: #2f2f2f;
  display: flex;
  align-items: stretch;
}
.sb-btn {
  width: 16px;
  box-sizing: border-box;
  border: 1px solid #555;
  background: #333;
  display: flex;
  align-items: center;
  justify-content: center;
}
.sb-thumb {
  width: 506px;
  margin-left: 956px;
  box-sizing: border-box;
  border: 1px solid #555;
  background: #444;
}
.sb-btn.right { margin-left: 48px; width: 15px; }

/* svg chart parts */
.axis-bg { fill: #232323; }
.grid-h { stroke: #282828; stroke-dasharray: 3 5; }
.grid-v { stroke: #272727; stroke-dasharray: 40 6; }
.grid-v.minor { stroke-dasharray: 6 6; }
.watermark { font-family: "Liberation Sans", sans-serif; font-size: 23.5px; fill: #333; }
.channel { fill: rgba(105, 160, 195, 0.3); }
.channel-edge { fill: none; stroke: #5b8299; stroke-width: 1; }
.support { stroke: #5b8299; stroke-width: 2; }
.wick { stroke-width: 1; }
.up .wick { stroke: #1f8f52; }
.down .wick { stroke: #e5534b; }
.up .body-r { fill: #1c7a48; stroke: #1f8f52; }
.down .body-r { fill: #bf3a32; stroke: #e5534b; }
.l-yellow, .l-blue, .l-slowk, .l-slowd, .l-avg, .l-value, .l-high, .l-low { fill: none; }
.l-yellow { stroke: #ffff00; stroke-width: 2; }
.l-blue { stroke: #4a90e8; stroke-width: 2; }
.axis-line { stroke: #777; stroke-width: 1; }
.axis-text { font-family: "Liberation Sans", sans-serif; font-size: 12px; fill: #6a6a6a; }
.tag-text { font-family: "Liberation Sans", sans-serif; font-size: 12px; fill: #000; }
.tag-text.white { fill: #fff; }
.l-band { stroke: #8c0000; stroke-width: 1; }
.l-slowk { stroke: #aaa; stroke-width: 1; }
.l-slowd { stroke: #0d4fa0; stroke-width: 1.2; }
.l-zero { stroke: #ccc; stroke-width: 1; }
.l-hist { stroke: #7a10c0; stroke-width: 1.5; }
.l-avg { stroke: #0f6e9a; stroke-width: 1.2; }
.l-value { stroke: #a80000; stroke-width: 1.2; }
.mark-down { fill: none; stroke: #ff6666; stroke-width: 3; }
.mark-up { fill: none; stroke: #00f000; stroke-width: 3; }
.l-high { stroke: #e00000; stroke-width: 1.2; }
.l-low { stroke: #00d000; stroke-width: 1.2; }
.date-text {
  font-family: "Liberation Sans", sans-serif;
  font-size: 12px;
  font-weight: 700;
  letter-spacing: -0.3px;
  fill: #6e6e6e;
}
.date-text.minor { font-weight: 400; fill: #5a5a5a; letter-spacing: 0; }
</style>
